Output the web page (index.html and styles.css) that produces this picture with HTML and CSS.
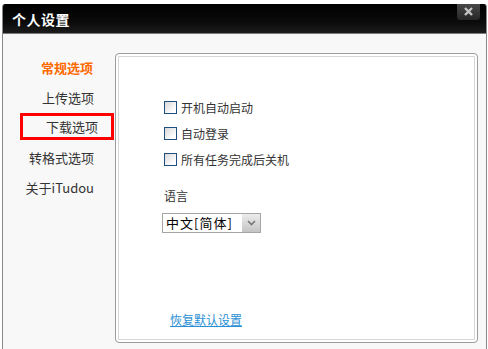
FILE: index.html
```html
<html lang="zh-CN">

<head>
    <title>个人设置</title>
    <link rel="stylesheet" href="styles.css">
</head>

<body>
    <div class="window">
        <div class="titlebar">
            <span class="title">个人设置</span>
            <button class="close">
                <svg width="9" height="9" viewBox="0 0 9 9">
                    <path d="M1 1 L8 8 M8 1 L1 8" stroke="#c4c4c4" stroke-width="2.4" />
                </svg>
            </button>
        </div>
        <div class="content">
            <ul class="nav">
                <li class="active">常规选项</li>
                <li>上传选项</li>
                <li class="marked">下载选项</li>
                <li>转格式选项</li>
                <li>关于iTudou</li>
            </ul>
            <div class="panel">
                <label class="check"><span class="box"></span>开机自动启动</label>
                <label class="check"><span class="box"></span>自动登录</label>
                <label class="check"><span class="box"></span>所有任务完成后关机</label>
                <div class="lang-label">语言</div>
                <div class="select">
                    <span class="select-text">中文[简体]</span>
                    <span class="select-btn">
                        <svg width="9" height="6" viewBox="0 0 9 6">
                            <path d="M1 1 L4.5 4.5 L8 1" fill="none" stroke="#777" stroke-width="1.6" />
                        </svg>
                    </span>
                </div>
                <a class="reset" href="#">恢复默认设置</a>
            </div>
        </div>
    </div>
</body>
</html>
```

FILE: styles.css
```css
html,
body {
    padding: 0;
    margin: 0;
    background: #fff;
    font-family: "Noto Sans CJK SC", "DejaVu Sans", sans-serif;
}

* {
    box-sizing: border-box;
}

.window {
    margin: 4px 0 0 2px;
    width: 485px;
    height: 360px;
    border: 1px solid #8a8a8a;
    border-top: 0;
    border-radius: 3px 3px 0 0;
    background: #f8f8f8;
    overflow: hidden;
}

.titlebar {
    position: relative;
    height: 30px;
    background: linear-gradient(#000, #0a0a0a 60%, #1c1c1c);
    border-bottom: 1px solid #7a7a7a;
    display: flex;
    align-items: center;
    padding-left: 9px;
}

.title {
    color: #fff;
    font-size: 14px;
    font-weight: bold;
    letter-spacing: 0.5px;
}

.close {
    position: absolute;
    top: -1px;
    right: 6px;
    width: 23px;
    height: 17px;
    border: 0;
    border-radius: 0 0 3px 3px;
    background: linear-gradient(#4a4a4a, #262626);
    padding: 0;
    display: flex;
    align-items: center;
    justify-content: center;
}

.content {
    display: flex;
}

.nav {
    list-style: none;
    margin: 0;
    padding: 18px 0 0 0;
    width: 112px;
}

.nav li {
    height: 30px;
    display: flex;
    align-items: center;
    justify-content: flex-end;
    padding-right: 21px;
    font-size: 13px;
    color: #333;
}

.nav li.active {
    color: #ff6a00;
    font-weight: bold;
    padding-right: 22px;
}

.nav li.marked {
    height: 27px;
    margin: 1px 1px 2px 17px;
    border: 3px solid #f00;
    padding-right: 13px;
}

.panel {
    margin-top: 19px;
    width: 363px;
    height: 290px;
    background: #fff;
    border: 1px solid #9c9c9c;
    border-radius: 4px;
    box-shadow: inset 0 0 0 2px #fff, inset 0 0 0 3px #d6d6d6;
    padding: 40px 0 0 48px;
    display: flex;
    flex-direction: column;
    align-items: flex-start;
}

.check {
    height: 26px;
    display: flex;
    align-items: center;
    font-size: 12px;
    color: #333;
}

.box {
    width: 13px;
    height: 13px;
    border: 1px solid #1f4f7e;
    background: linear-gradient(135deg, #d8d8d8, #fff 80%);
    margin-right: 4px;
}

.lang-label {
    margin-top: 16px;
    font-size: 12px;
    line-height: 16px;
    color: #333;
}

.select {
    margin-top: 9px;
    margin-left: -2px;
    width: 99px;
    height: 20px;
    border: 1px solid #a5a5a5;
    display: flex;
    align-items: stretch;
    background: #fff;
}

.select-text {
    flex: 1;
    font-size: 13px;
    line-height: 18px;
    padding-left: 3px;
    letter-spacing: 1px;
    color: #000;
}

.select-btn {
    width: 18px;
    background: linear-gradient(#ececec, #c4c4c4);
    display: flex;
    align-items: center;
    justify-content: center;
}

.reset {
    margin: 79px 0 0 6px;
    font-size: 12px;
    line-height: 16px;
    color: #2a8fd4;
    text-decoration: underline;
}
```
